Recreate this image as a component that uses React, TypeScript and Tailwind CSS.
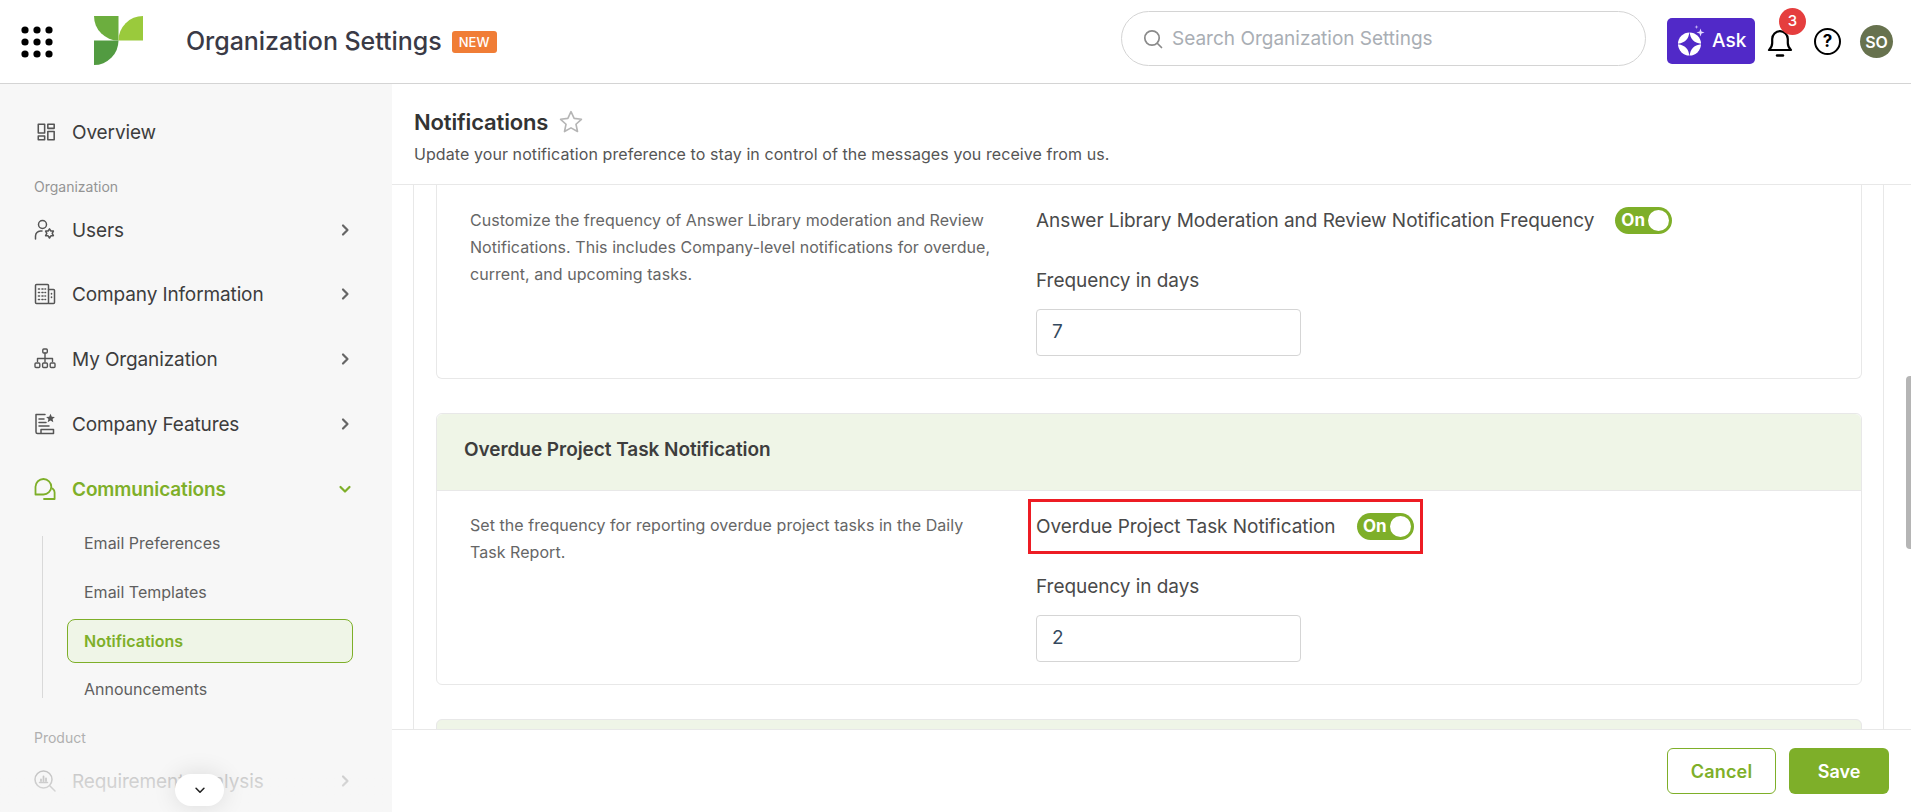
import React from "react";

const ICON = "#555555";
const GREEN = "#7eaf29";

function Grid() {
  const dots = [6, 18, 30];
  return (
    <svg width="36" height="36" viewBox="0 0 36 36" className="shrink-0">
      {dots.map((y) => dots.map((x) => <circle key={`${x}-${y}`} cx={x} cy={y} r="3.6" fill="#000" />))}
    </svg>
  );
}

function Logo() {
  return (
    <svg width="49" height="49" viewBox="0 0 49 49" className="shrink-0">
      <path d="M0 0H24.5V24.5A24.5 24.5 0 0 1 0 0Z" fill="#6cae3e" />
      <path d="M49 0V24.5H24.5A24.5 24.5 0 0 1 49 0Z" fill="#9aca3c" />
      <path d="M0 24.5H24.5A24.5 24.5 0 0 1 0 49Z" fill="#529b41" />
    </svg>
  );
}

function Stroke({ children, size = 22, color = ICON, sw = 1.5 }: { children: React.ReactNode; size?: number; color?: string; sw?: number }) {
  return (
    <svg width={size} height={size} viewBox="0 0 22 22" fill="none" stroke={color} strokeWidth={sw} strokeLinecap="round" strokeLinejoin="round" className="shrink-0">
      {children}
    </svg>
  );
}

const OverviewIcon = () => (
  <Stroke size={20} sw={1.7}>
    <rect x="2.5" y="2.5" width="7" height="9.5" />
    <rect x="13" y="2.5" width="7" height="4.5" />
    <rect x="2.5" y="15.500" width="7" height="4" />
    <rect x="13" y="10.500" width="7" height="9" />
  </Stroke>
);
const UsersIcon = () => (
  <Stroke>
    <circle cx="8.5" cy="5.5" r="4" />
    <path d="M1.5 20V17a5.5 5.5 0 0 1 5-5h1.500" />
    <path d="M15.5 9.800l1.400 2.200 2.500.1-1.200 2.300 1.200 2.300-2.500.1-1.400 2.200-1.400-2.200-2.500-.1 1.200-2.300-1.200-2.300 2.500-.1z" />
  </Stroke>
);
const BuildingIcon = () => (
  <Stroke>
    <rect x="1.500" y="1.500" width="13" height="19" rx="1" />
    <path d="M14.500 6.500h5a1 1 0 0 1 1 1v12a1 1 0 0 1-1 1h-5" />
    <path d="M4.500 6h1M8 6h1M11 6h.5M4.500 9.500h1M8 9.500h1M11 9.500h.5M4.500 13h1M8 13h1M11 13h.5M4.500 16.500h1M8 16.500h1M11 16.500h.5M17.500 10.500v.5M17.500 14v.5" strokeWidth="1.600" />
  </Stroke>
);
const OrgIcon = () => (
  <Stroke sw={1.4}>
    <rect x="8.800" y="1" width="4.500" height="4" rx="1" />
    <path d="M11 5v9M3.500 13.500V10.500h15v3" />
    <rect x="1" y="15" width="4.800" height="4.500" rx="1" />
    <rect x="8.600" y="15" width="4.800" height="4.500" rx="1" />
    <rect x="16.200" y="15" width="4.800" height="4.500" rx="1" />
  </Stroke>
);
const FeaturesIcon = () => (
  <svg width="22" height="22" viewBox="0 0 22 22" fill="none" stroke={ICON} strokeWidth="1.500" strokeLinecap="round" strokeLinejoin="round" className="shrink-0">
    <path d="M11 1.500H2v17.500a1.500 1.500 0 0 0 1.500 1.500h16v-4H7V20" />
    <path d="M5 6h5M5 9.500h7M5 13h10" />
    <path d="M16.500.8l1.300 2.900 3.100.3-2.300 2.100.7 3.100-2.800-1.600-2.800 1.600.7-3.100-2.300-2.100 3.100-.3z" fill={ICON} stroke="none" />
  </svg>
);
const ChatIcon = () => (
  <Stroke color={GREEN} sw={1.800}>
    <path d="M9.500 1a7.800 7.800 0 0 1 7.800 7.800c0 4.200-3.600 7.700-7.800 7.700H1.500V8.800A7.900 7.900 0 0 1 9.500 1z" />
    <path d="M18.500 10.500c1.300 1 2.100 2.200 2.100 4v6.500H10" />
  </Stroke>
);
const AnalysisIcon = () => (
  <Stroke color="#a9a9a9" sw={1.500}>
    <circle cx="9.500" cy="9.500" r="8.500" />
    <path d="M16 16l5 5M5.500 12.500h8" />
    <path d="M7 11V9.500M9.500 11V6.500M12 11V8.500" strokeWidth="1.800" />
  </Stroke>
);

const Chevron = ({ down, color = "#666", size = 16, sw = 2.2 }: { down?: boolean; color?: string; size?: number; sw?: number }) => (
  <svg width={size} height={size} viewBox="0 0 16 16" fill="none" stroke={color} strokeWidth={sw} strokeLinecap="round" strokeLinejoin="round">
    <path d={down ? "M3.500 6l4.500 4.500L12.500 6" : "M6 3.500L10.500 8 6 12.500"} />
  </svg>
);

function NavItem({ icon, label, dim, active }: { icon: React.ReactNode; label: string; dim?: boolean; active?: boolean }) {
  return (
    <div className="flex h-[50px] items-center pl-[34px] pr-[39px]">
      <span className="flex w-[38px] shrink-0">{icon}</span>
      <span className={`flex-1 pt-[2px] text-[19px] tracking-[-0.12px] ${active ? "font-semibold text-[#7eaf29]" : dim ? "text-[#b0b0b0]" : "text-[#3d3d3d]"}`}>{label}</span>
      <Chevron down={active} color={active ? GREEN : dim ? "#b5b5b5" : "#666"} />
    </div>
  );
}

function Toggle() {
  return (
    <span className="flex h-[27px] w-[57px] shrink-0 items-center justify-between rounded-full bg-[#7eaf29] pl-[6px] pr-[3px]">
      <span className="text-[17px] font-bold leading-none text-white">On</span>
      <span className="h-[21px] w-[21px] rounded-full bg-white" />
    </span>
  );
}

function Field({ value }: { value: string }) {
  return (
    <div>
      <div className="text-[19px] leading-[26px] tracking-[-0.05px] text-[#4a4a4a]">Frequency in days</div>
      <div className="mt-[15px] flex h-[47px] w-[265px] items-center rounded-[4px] border border-[#d5d5d5] bg-white pl-[15px] text-[19px] text-[#34495e]">{value}</div>
    </div>
  );
}

export default function App() {
  return (
    <div className="flex h-[812px] w-[1911px] flex-col overflow-hidden bg-white font-['Inter',sans-serif]">
      <header className="flex h-[84px] shrink-0 items-center border-b border-[#d4d4d4] bg-white">
        <div className="ml-[19px] flex items-center">
          <Grid />
          <div className="-mt-[2px] ml-[39px]"><Logo /></div>
          <div className="ml-[43px] text-[25px] font-medium leading-none tracking-[-0.05px] text-[#3a3a46]">Organization Settings</div>
          <div className="ml-[10px] mt-[1px] w-[45px] rounded-[3px] bg-[#f07d36] py-[4px] text-center text-[13px] font-medium leading-[14px] text-white">NEW</div>
        </div>
        <div className="-mt-[6px] ml-auto flex h-[55px] w-[525px] items-center rounded-[28px] border border-[#d4d4d4] bg-white pl-[21px]">
          <svg width="20" height="20" viewBox="0 0 20 20" fill="none" stroke="#8a8a8a" strokeWidth="1.700" strokeLinecap="round"><circle cx="9" cy="9" r="7.200" /><path d="M14.500 14.500l4 4" /></svg>
          <span className="ml-[9px] pt-[2px] text-[19px] text-[#a9aeb4]">Search Organization Settings</span>
        </div>
        <div className="-mt-[2px] ml-[21px] flex h-[46px] w-[88px] items-center rounded-[5px] bg-[#5129c8] pl-[11px]">
          <svg width="28" height="34" viewBox="0 0 28 34" className="shrink-0">
            <circle cx="11.500" cy="20" r="11.500" fill="#fff" />
            <path d="M11.500 7C12.300 15.500 15.500 19 25 20 15.500 21 12.300 24.500 11.500 33 10.700 24.500 7.500 21-2 20 7.500 19 10.700 15.500 11.500 7Z" fill="#5129c8" />
            <path d="M22.500 4.500l1 3 3 1-3 1-1 3-1-3-3-1 3-1z" fill="#e6dcff" />
            <path d="M18.500 1l.5 1.500 1.500.5-1.500.5-.5 1.500-.5-1.500L16.500 3l1.500-.5z" fill="#cbbcf5" />
          </svg>
          <span className="ml-[6px] pt-[2px] text-[19px] font-medium text-white">Ask</span>
        </div>
        <div className="relative ml-[11px] flex w-[27px] justify-center">
          <svg width="26" height="30" viewBox="0 0 26 30" fill="none" stroke="#000" strokeWidth="2.200" strokeLinecap="round" strokeLinejoin="round">
            <path d="M2 23h22c-2.200-2-3.200-4-3.200-7v-4a7.800 7.800 0 0 0-15.600 0v4c0 3-1 5-3.200 7z" />
            <path d="M10 28.500h6" strokeWidth="2.400" />
          </svg>
          <span className="absolute -right-[13px] -top-[19px] flex h-[27px] w-[27px] items-center justify-center rounded-full bg-[#e53e3e] text-[15px] font-medium text-white">3</span>
        </div>
        <div className="ml-[21px] flex h-[27px] w-[27px] items-center justify-center rounded-full border-[2.500px] border-black text-[17px] font-bold leading-none text-black">?</div>
        <div className="ml-[19px] mr-[18px] flex h-[33px] w-[33px] items-center justify-center rounded-full bg-[#67724e] text-[16px] font-semibold text-white">SO</div>
      </header>

      <div className="flex min-h-0 flex-1">
        <aside className="relative w-[392px] shrink-0 overflow-hidden bg-[#f7f7f7]">
          <div className="pt-[23px]">
            <div className="flex h-[50px] items-center pl-[36px]">
              <span className="flex w-[36px] shrink-0"><OverviewIcon /></span>
              <span className="pt-[2px] text-[19px] tracking-[-0.12px] text-[#3d3d3d]">Overview</span>
            </div>
            <div className="mt-[19px] h-[22px] pl-[34px] text-[14px] leading-[22px] text-[#949494]">Organization</div>
            <div className="mt-[7px]">
              <NavItem icon={<UsersIcon />} label="Users" />
              <div className="mt-[14px]"><NavItem icon={<BuildingIcon />} label="Company Information" /></div>
              <div className="mt-[15px]"><NavItem icon={<OrgIcon />} label="My Organization" /></div>
              <div className="mt-[15px]"><NavItem icon={<FeaturesIcon />} label="Company Features" /></div>
              <div className="mt-[15px]"><NavItem icon={<ChatIcon />} label="Communications" active /></div>
            </div>
            <div className="ml-[42px] mr-[39px] mt-[22px] border-l border-[#d9d9d9] pb-[2px] pl-[24px] text-[16px] leading-[14px] text-[#5f5f5f]">
              <div className="h-[14px] pl-[17px]">Email Preferences</div>
              <div className="mt-[35px] h-[14px] pl-[17px]">Email Templates</div>
              <div className="mt-[20px] flex h-[44px] items-center rounded-[8px] border border-[#7eaf29] bg-[#eff5e7] pl-[16px] font-semibold text-[#7eaf29]">Notifications</div>
              <div className="mt-[19px] h-[14px] pl-[17px]">Announcements</div>
            </div>
            <div className="mt-[29px] h-[22px] pl-[34px] text-[14px] leading-[22px] text-[#b0b0b0]">Product</div>
            <div className="mt-[7px]"><NavItem icon={<AnalysisIcon />} label="Requirement Analysis" dim /></div>
          </div>
          <div className="absolute inset-x-0 bottom-0 h-[70px] bg-gradient-to-b from-[#f7f7f7]/0 to-[#f7f7f7]/80" />
          <div className="absolute bottom-[6px] left-[175px] flex h-[32px] w-[49px] items-center justify-center rounded-full bg-white shadow-[0_0_24px_rgba(0,0,0,0.12)]">
            <Chevron down color="#222" size={14} sw={1.800} />
          </div>
        </aside>

        <main className="relative flex min-w-0 flex-1 flex-col bg-white">
          <div className="h-[101px] shrink-0 border-b border-[#e8e8e8] pl-[22px] pt-[23px]">
            <div className="flex items-center">
              <span className="text-[22px] font-semibold leading-[30px] tracking-[-0.15px] text-[#333]">Notifications</span>
              <svg className="ml-[10px]" width="26" height="26" viewBox="0 0 24 24" fill="none" stroke="#b5b5b5" strokeWidth="1.500" strokeLinejoin="round"><path d="M12 2.500l2.900 6.200 6.700.8-5 4.600 1.400 6.700-6-3.400-6 3.400 1.400-6.700-5-4.600 6.700-.8z" /></svg>
            </div>
            <div className="mt-[5px] text-[16px] leading-[24px] tracking-[0.08px] text-[#555]">Update your notification preference to stay in control of the messages you receive from us.</div>
          </div>

          <div className="min-h-0 flex-1 overflow-hidden">
            <div className="ml-[21px] h-full w-[1471px] border-x border-[#e8e8e8] pl-[22px] pr-[21px]">
              <section className="flex h-[194px] rounded-b-[6px] border-x border-b border-[#e8e8e8] bg-white">
                <p className="w-[599px] shrink-0 pl-[33px] pr-[35px] pt-[22px] text-[16px] leading-[27px] tracking-[0.05px] text-[#666]">Customize the frequency of Answer Library moderation and Review Notifications. This includes Company-level notifications for overdue, current, and upcoming tasks.</p>
                <div className="pt-[22px]">
                  <div className="flex h-[27px] items-center gap-[21px]">
                    <span className="pt-[2px] text-[19px] tracking-[-0.05px] text-[#4a4a4a]">Answer Library Moderation and Review Notification Frequency</span>
                    <Toggle />
                  </div>
                  <div className="mt-[34px]"><Field value="7" /></div>
                </div>
              </section>

              <section className="mt-[34px] h-[272px] rounded-[6px] border border-[#e8e8e8] bg-white">
                <div className="flex h-[77px] items-center rounded-t-[6px] border-b border-[#e8e8e8] bg-[#eff5e7] pb-[4px] pl-[27px] text-[19px] font-semibold tracking-[-0.05px] text-[#3d3d3d]">Overdue Project Task Notification</div>
                <div className="flex">
                  <p className="w-[599px] shrink-0 pl-[33px] pr-[35px] pt-[21px] text-[16px] leading-[27px] tracking-[0.05px] text-[#666]">Set the frequency for reporting overdue project tasks in the Daily Task Report.</p>
                  <div className="pt-[8px]">
                    <div className="-ml-[8px] flex h-[55px] w-[395px] items-center border-[3px] border-[#ed1c24] pl-[5px] pr-[6px]">
                      <span className="flex-1 pt-[1px] text-[19px] tracking-[-0.05px] text-[#4a4a4a]">Overdue Project Task Notification</span>
                      <Toggle />
                    </div>
                    <div className="mt-[20px]"><Field value="2" /></div>
                  </div>
                </div>
              </section>

              <section className="mt-[34px] h-[78px] rounded-t-[6px] border border-[#e8e8e8] bg-[#eff5e7]" />
            </div>
          </div>

          <div className="flex h-[83px] shrink-0 items-center justify-end gap-[13px] border-t border-[#e8e8e8] bg-white pr-[22px]">
            <div className="flex h-[46px] w-[109px] items-center justify-center rounded-[6px] border border-[#7eaf29] bg-white text-[18px] font-semibold tracking-[0.2px] text-[#7eaf29]">Cancel</div>
            <div className="flex h-[46px] w-[100px] items-center justify-center rounded-[6px] bg-[#7eaf29] text-[18px] font-semibold text-white">Save</div>
          </div>

          <div className="absolute right-0 top-[292px] h-[173px] w-[5px] rounded-l-[4px] bg-[#b5b5b5]" />
        </main>
      </div>
    </div>
  );
}
